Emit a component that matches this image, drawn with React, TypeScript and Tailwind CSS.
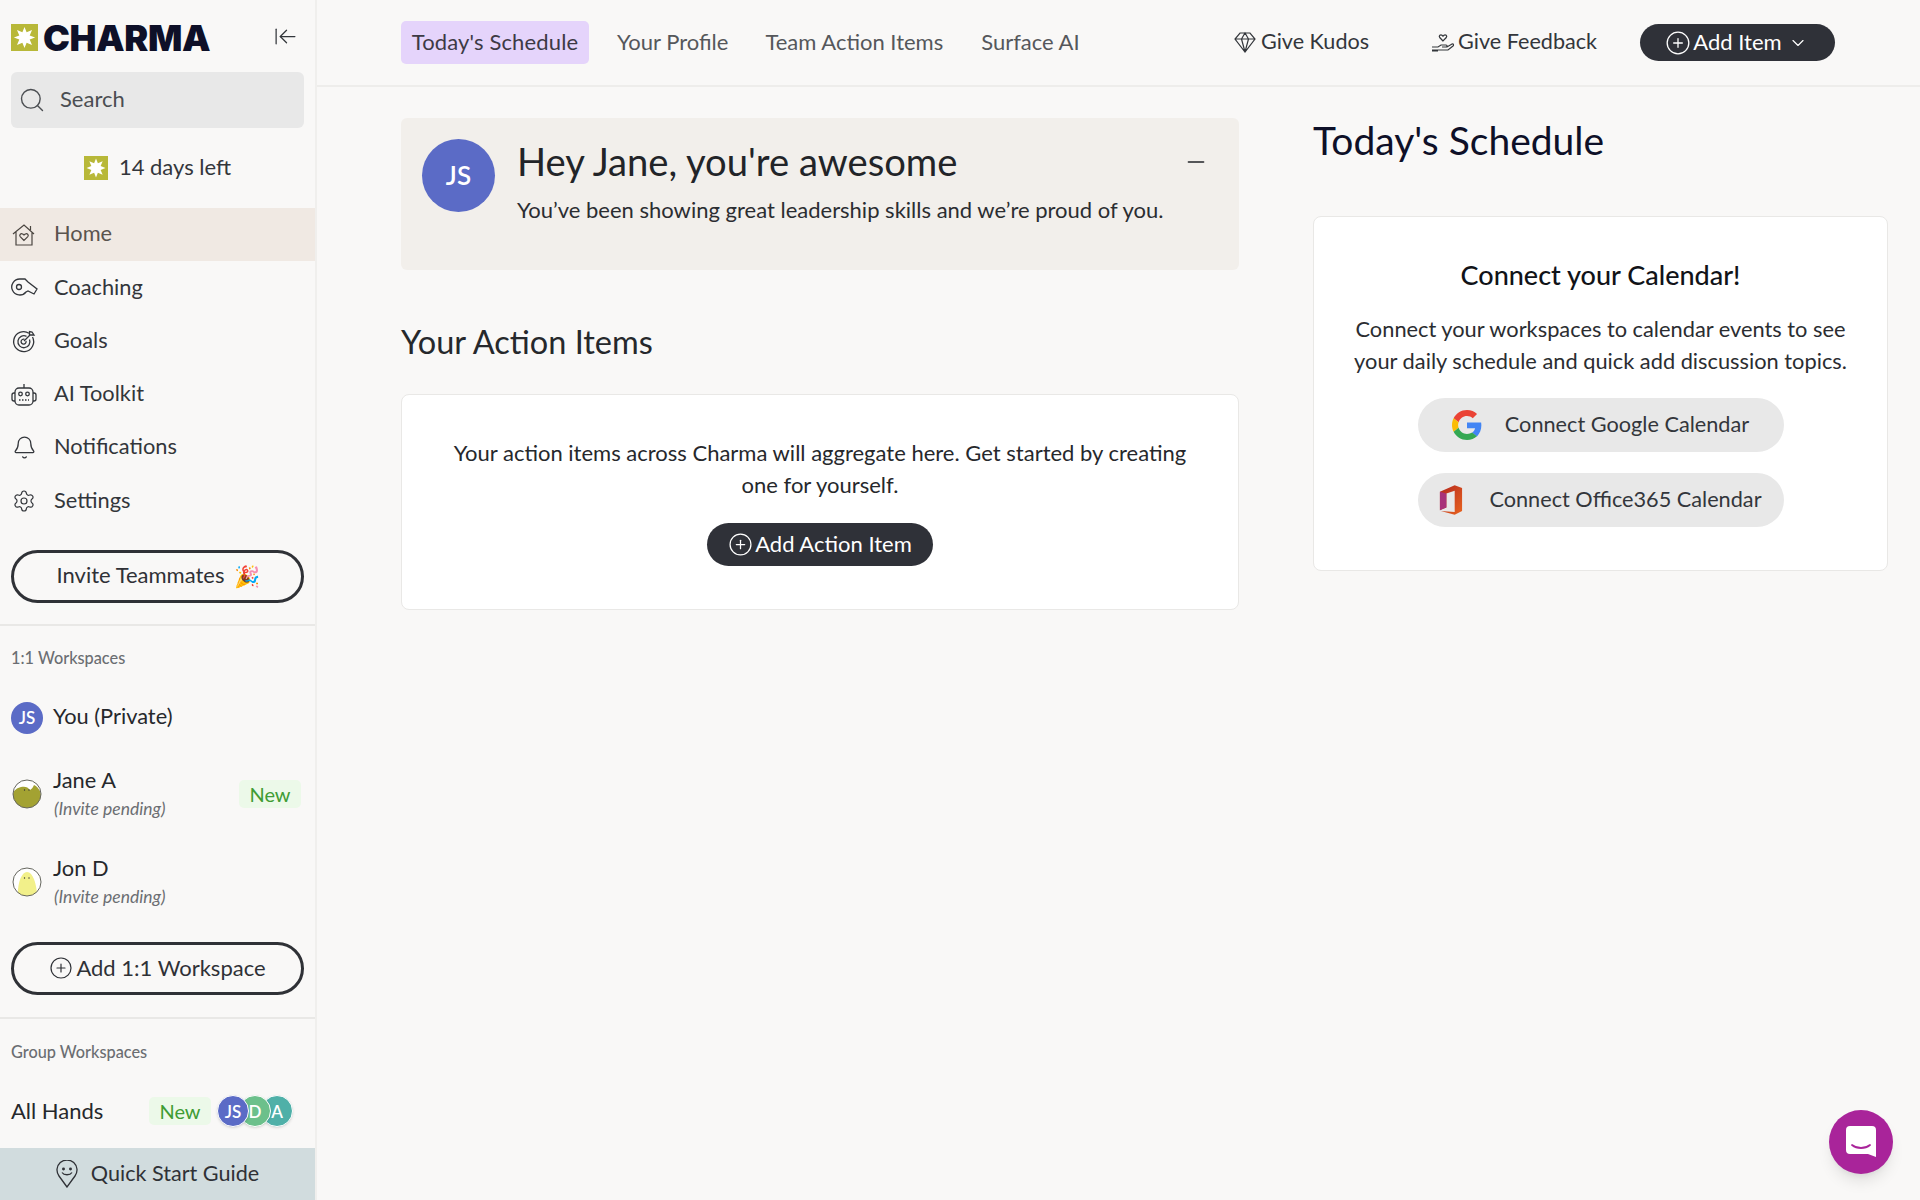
import React from "react";
import { Search, ChevronDown, CirclePlus, Bell, Settings, ArrowLeftToLine, Minus } from "lucide-react";

const font = { fontFamily: '"Lato", "Noto Sans", sans-serif' };

const Star = ({ size, className = "" }: { size: number; className?: string }) => (
  <svg width={size} height={size} viewBox="0 0 28 28" className={className}>
    <rect width="28" height="28" fill="#b8b838" />
    <polygon fill="#ffffff" points="14,3 16.2,8.6 21.8,6.2 19.4,11.8 25,14 19.4,16.2 21.8,21.8 16.2,19.4 14,25 11.8,19.4 6.2,21.8 8.6,16.2 3,14 8.6,11.8 6.2,6.2 11.8,8.6" />
  </svg>
);

const HomeIcon = () => (
  <svg width="24" height="24" viewBox="0 0 24 24" fill="none" stroke="#4a4540" strokeWidth="1.2">
    <path d="M1 11 12 2l10 9M4 9v13h16V9M18.500 7V3" />
    <path d="M12 17.500 8.200 13.600c-1.400-1.700.9-3.800 2.500-2.500l1.300 1 1.300-1c1.600-1.300 3.900.8 2.500 2.500z" />
  </svg>
);
const WhistleIcon = () => (
  <svg width="28" height="24" viewBox="0 0 28 24" fill="none" stroke="#33363b" strokeWidth="1.300">
    <path d="M10 3h5l3 3 9 7-3 5-6-3-2 1a8 8 0 1 1-6-13z" />
    <circle cx="9" cy="11" r="2.500" />
  </svg>
);
const GoalIcon = () => (
  <svg width="24" height="24" viewBox="0 0 24 24" fill="none" stroke="#33363b" strokeWidth="1.300">
    <path d="M17 4.200A10 10 0 1 0 20.500 8" />
    <path d="M14.500 7.300A6 6 0 1 0 17.500 10.500" />
    <path d="M12.500 10.300A2.500 2.500 0 1 0 14 12" />
    <path d="m12 12 6-6M17.500 2.500v3.500H22l-2-3z" />
  </svg>
);
const RobotIcon = () => (
  <svg width="26" height="24" viewBox="0 0 26 24" fill="none" stroke="#33363b" strokeWidth="1.300">
    <rect x="4" y="5" width="18" height="17" rx="4" />
    <path d="M13 5V1M4 10H3a2 2 0 0 0-2 2v4a2 2 0 0 0 2 2h1M22 10h1a2 2 0 0 1 2 2v4a2 2 0 0 1-2 2h-1" />
    <circle cx="9.500" cy="11" r="1.800" />
    <circle cx="16.500" cy="11" r="1.800" />
    <path d="M8 17h10" strokeDasharray="1.500 1.500" />
  </svg>
);

const NavRow = ({ icon, label, active = false }: { icon: React.ReactNode; label: string; active?: boolean }) => (
  <div className={`flex h-[53.3px] items-center ${active ? "bg-[#f0e9e3] text-[#5a544e]" : "text-[#33363b]"}`}>
    <div className="flex w-[54px] shrink-0 justify-center pr-[6px]">{icon}</div>
    <span className="pb-[2px] text-[21.800px]">{label}</span>
  </div>
);

const PillOutline = ({ children }: { children: React.ReactNode }) => (
  <div className="mx-[11px] flex h-[53px] items-center justify-center rounded-full border-[3px] border-[#2f3136] pb-[2px] text-[22px] text-[#2f3136]">
    {children}
  </div>
);

const NewBadge = () => (
  <span className="flex h-[28px] w-[62px] items-center justify-center rounded-[5px] bg-[#ecf9e9] text-[20px] text-[#3f9c35]">New</span>
);

const Blob = ({ fill }: { fill: string }) => (
  <svg width="30" height="30" viewBox="0 0 30 30" className="shrink-0">
    <defs>
      <clipPath id={`c${fill.slice(1)}`}><circle cx="15" cy="15" r="14" /></clipPath>
    </defs>
    <circle cx="15" cy="15" r="14" fill="#fff" />
    <g clipPath={`url(#c${fill.slice(1)})`}>
      {fill === "#a3a232" ? (
        <path d="M1 30V15c1-4 4-6 8-7 4-1 7 0 9 3 2-1 3-3 4-5 4 2 7 6 7 11v13z" fill={fill} />
      ) : (
        <path d="M6 30c-1-12 3-25 9-25s10 13 10 25z" fill={fill} />
      )}
    </g>
    <circle cx="15" cy="15" r="14" fill="none" stroke="#66665e" strokeWidth="1" />
    <circle cx="12.500" cy="11" r=".7" fill="#333" />
    <circle cx="17" cy="11" r=".7" fill="#333" />
  </svg>
);

const WorkspaceRow = ({ fill, name, badge = false }: { fill: string; name: string; badge?: boolean }) => (
  <div className="flex h-[88px] items-center pl-[12px] pr-[14px]">
    <Blob fill={fill} />
    <div className="ml-[11px] flex-1 leading-none">
      <div className="text-[21.800px] leading-[28px] text-[#26282c]">{name}</div>
      <div className="mt-[3px] pl-[1px] text-[17.5px] italic leading-[24px] text-[#6b6e72]">(Invite pending)</div>
    </div>
    {badge && <NewBadge />}
  </div>
);

const SmallAvatar = ({ bg, t, cls }: { bg: string; t: string; cls?: string }) => (
  <span className={`flex h-[32px] w-[32px] items-center justify-center rounded-full border border-white text-[17px] font-semibold text-white shadow-sm ${bg} ${cls ?? ""}`}>{t}</span>
);

const Sidebar = () => (
  <aside className="flex h-full w-[317px] shrink-0 flex-col border-r-2 border-[#f0efed]">
    <div className="flex h-[72px] items-center pl-[11px] pr-[17px] pt-[3px]">
      <Star size={27} />
      <span className="ml-[5px] flex-1 text-[36px] font-black leading-none tracking-[-0.4px] text-[#0e1028]" style={{ fontFamily: '"Inter", sans-serif' }}>CHARMA</span>
      <ArrowLeftToLine size={25} strokeWidth={1.200} color="#33363b" className="mb-[2px]" />
    </div>
    <div className="mx-[11px] flex h-[56px] items-center rounded-[6px] bg-[#e8e8e8] pl-[7px] text-[22px] text-[#4b4e52]">
      <Search size={28} strokeWidth={1.200} />
      <span className="ml-[14px] pb-[4px]">Search</span>
    </div>
    <div className="flex h-[80px] items-center justify-center pb-[3px] text-[22px] text-[#33363b]">
      <Star size={24} className="mr-[11px] mt-[3px]" />
      14 days left
    </div>
    <NavRow active icon={<HomeIcon />} label="Home" />
    <NavRow icon={<WhistleIcon />} label="Coaching" />
    <NavRow icon={<GoalIcon />} label="Goals" />
    <NavRow icon={<RobotIcon />} label="AI Toolkit" />
    <NavRow icon={<Bell size={25} strokeWidth={1.200} />} label="Notifications" />
    <NavRow icon={<Settings size={24} strokeWidth={1.200} />} label="Settings" />
    <div className="mt-[22px]">
      <PillOutline>
        <span className="ml-[2px] pb-[1px]">Invite Teammates</span>
        <span className="ml-[10px] text-[21px]">🎉</span>
      </PillOutline>
    </div>
    <div className="mt-[21px] h-[2px] bg-[#e9e8e6]" />
    <div className="mt-[21px] pl-[11px] text-[16.3px] font-medium leading-[22px] text-[#6b6e72]">1:1 Workspaces</div>
    <div className="mt-[33px] flex h-[32px] items-center pl-[11px]">
      <span className="flex h-[32px] w-[32px] items-center justify-center rounded-full bg-[#5b6bc6] text-[17px] font-semibold text-white">JS</span>
      <span className="ml-[10px] pb-[2px] text-[21.800px] text-[#26282c]">You (Private)</span>
    </div>
    <div className="mt-[16px]">
      <WorkspaceRow fill="#a3a232" name="Jane A" badge />
    </div>
    <WorkspaceRow fill="#f2f08a" name="Jon D" />
    <div className="mt-[16px]">
      <PillOutline>
        <CirclePlus size={24} strokeWidth={1.200} className="mt-[2px]" />
        <span className="ml-[3px]">Add 1:1 Workspace</span>
      </PillOutline>
    </div>
    <div className="mt-[22px] h-[2px] bg-[#e9e8e6]" />
    <div className="mt-[22px] pl-[11px] text-[16.3px] font-medium leading-[22px] text-[#6b6e72]">Group Workspaces</div>
    <div className="flex flex-1 items-center pl-[11px] pr-[22px] pt-[12px]">
      <span className="flex-1 pb-[2px] text-[22px] text-[#26282c]">All Hands</span>
      <NewBadge />
      <div className="ml-[6px] flex">
        <SmallAvatar bg="bg-[#5b6bc6]" t="JS" cls="relative z-20" />
        <SmallAvatar bg="bg-[#6cc08b]" t="D" cls="relative z-10 -ml-[10px]" />
        <SmallAvatar bg="bg-[#4fb0a8]" t="A" cls="-ml-[10px]" />
      </div>
    </div>
    <div className="flex h-[52px] shrink-0 items-center justify-center bg-[#d1dcde] text-[21.600px] text-[#2f3136]">
      <svg width="22" height="28" viewBox="0 0 22 28" fill="none" stroke="#2f3136" strokeWidth="1.300" className="mr-[13px]">
        <path d="M11 27 3 16a10 10 0 1 1 16 0z" />
        <circle cx="7.500" cy="9" r=".8" fill="#2f3136" />
        <circle cx="14.500" cy="9" r=".8" fill="#2f3136" />
        <path d="M6 12.500c2 3 8 3 10 0" />
      </svg>
      <span className="pb-[2px]">Quick Start Guide</span>
    </div>
  </aside>
);

const DiamondIcon = () => (
  <svg width="22" height="22" viewBox="0 0 22 22" fill="none" stroke="#33363b" strokeWidth="1.200" className="mr-[5px]">
    <path d="M6 2h10l5 6-10 13L1 8zM1 8h20M7.500 8 11 21l3.500-13L11 2z" />
  </svg>
);
const HandHeartIcon = () => (
  <svg width="24" height="24" viewBox="0 0 24 24" fill="none" stroke="#33363b" strokeWidth="1.200" className="mr-[3px]">
    <path d="M12 11 8.700 7.500c-1.300-1.700.9-3.500 2.300-2.300l1 .9 1-.9c1.400-1.200 3.600.6 2.300 2.300z" />
    <path d="M1 17h6l3-2h5c1.500 0 1.500 2 0 2h-4 5l5-3c1.500-.5 2 1 1 2l-5 4H7H1M1 21h6" />
  </svg>
);

const TopBar = () => (
  <header className="flex h-[87px] shrink-0 items-center border-b-2 border-[#eeedeb] pl-[84px] text-[22px]">
    <div className="flex h-[43px] w-[188px] items-center justify-center rounded-[5px] bg-[#e5d4fb] pb-[2px] tracking-[0.15px] text-[#3d3a45]">Today's Schedule</div>
    <span className="ml-[28px] pb-[2px] text-[#55575b]">Your Profile</span>
    <span className="ml-[37px] pb-[2px] text-[#55575b]">Team Action Items</span>
    <span className="ml-[38px] pb-[2px] text-[#55575b]">Surface AI</span>
    <div className="ml-auto flex items-center text-[21.600px] text-[#33363b]">
      <DiamondIcon /><span className="pb-[2px]">Give Kudos</span>
    </div>
    <div className="ml-[62px] flex items-center text-[21.600px] text-[#33363b]">
      <HandHeartIcon /><span className="pb-[2px]">Give Feedback</span>
    </div>
    <div className="ml-[43px] mr-[85px] flex h-[37px] w-[195px] items-center justify-center rounded-full bg-[#2f3138] text-white">
      <CirclePlus size={26} strokeWidth={1.200} className="mr-[2px] -ml-[2px]" />
      <span className="pb-[2px]">Add Item</span>
      <ChevronDown size={20} strokeWidth={1.400} className="ml-[6px]" />
    </div>
  </header>
);

const GoogleIcon = () => (
  <svg width="30" height="30" viewBox="0 0 48 48">
    <path fill="#EA4335" d="M24 9.500c3.540 0 6.710 1.220 9.210 3.600l6.850-6.850C35.900 2.380 30.470 0 24 0 14.620 0 6.510 5.380 2.560 13.220l7.980 6.190C12.430 13.720 17.740 9.500 24 9.500z" />
    <path fill="#4285F4" d="M46.980 24.550c0-1.570-.15-3.090-.38-4.550H24v9.020h12.940c-.58 2.960-2.260 5.480-4.780 7.180l7.730 6c4.510-4.180 7.090-10.360 7.090-17.650z" />
    <path fill="#FBBC05" d="M10.530 28.590c-.48-1.450-.76-2.990-.76-4.590s.27-3.140.76-4.590l-7.980-6.190C.92 16.460 0 20.120 0 24c0 3.880.92 7.540 2.560 10.780l7.970-6.190z" />
    <path fill="#34A853" d="M24 48c6.480 0 11.930-2.130 15.890-5.810l-7.730-6c-2.150 1.450-4.920 2.300-8.160 2.300-6.260 0-11.570-4.220-13.470-9.910l-7.980 6.190C6.510 42.620 14.620 48 24 48z" />
  </svg>
);
const OfficeIcon = () => (
  <svg width="24" height="30" viewBox="0 0 26 32">
    <defs>
      <linearGradient id="off" x1="0" y1="0" x2="1" y2="1">
        <stop offset="0" stopColor="#b3261e" />
        <stop offset="1" stopColor="#e8641f" />
      </linearGradient>
    </defs>
    <path fill="url(#off)" d="M17 0 25 3v25l-8 4-15-4 15 1V6L8 9v15l-7 3V7z" />
    <path fill="#a83279" d="M1 7l7 2v15l-7 3z" />
  </svg>
);

const CalButton = ({ icon, label, iconGap }: { icon: React.ReactNode; label: string; iconGap: string }) => (
  <div className="flex h-[54px] w-[366px] items-center justify-center rounded-full bg-[#e8e8e8] text-[21.700px] text-[#33363b]">
    <span className={iconGap}>{icon}</span>
    <span className="pb-[1px]">{label}</span>
  </div>
);

const Card = ({ className = "", children }: { className?: string; children: React.ReactNode }) => (
  <div className={`rounded-[8px] border border-[#e9e8e6] bg-white ${className}`}>{children}</div>
);

export default function App() {
  return (
    <div className="relative flex h-[1200px] w-[1920px] overflow-hidden bg-[#f9f8f7]" style={font}>
      <Sidebar />
      <main className="flex min-w-0 flex-1 flex-col">
        <TopBar />
        <div className="flex gap-[74px] pl-[84px] pt-[31px]">
          <section className="w-[838px]">
            <div className="flex h-[152px] rounded-[6px] bg-[#f2efeb] pl-[21px] pr-[33px] pt-[21px]">
              <span className="flex h-[73px] w-[73px] shrink-0 items-center justify-center rounded-full bg-[#5b6bc6] text-[26px] font-semibold text-white">JS</span>
              <div className="ml-[22px] flex-1">
                <h1 className="text-[38.200px] leading-[44px] text-[#222428]">Hey Jane, you're awesome</h1>
                <p className="mt-[12px] text-[22px] leading-[30px] text-[#2b2d31]">You’ve been showing great leadership skills and we’re proud of you.</p>
              </div>
              <Minus size={26} strokeWidth={1.500} color="#222428" className="mt-[10px] -mr-[3px]" />
            </div>
            <h2 className="mt-[52px] text-[32.500px] leading-[40px] text-[#26282c]">Your Action Items</h2>
            <Card className="mt-[32px] flex h-[216px] flex-col items-center pt-[42px]">
              <p className="w-[760px] text-center text-[22px] leading-[32px] text-[#26282c]">Your action items across Charma will aggregate here. Get started by creating one for yourself.</p>
              <div className="mt-[22px] flex h-[43px] w-[226px] items-center justify-center rounded-full bg-[#2f3138] text-[22px] text-white">
                <CirclePlus size={25} strokeWidth={1.200} className="mr-[2px]" />
                <span className="pb-[2px]">Add Action Item</span>
              </div>
            </Card>
          </section>
          <section className="w-[575px]">
            <h2 className="text-[39px] leading-[44px] text-[#0e1028]">Today's Schedule</h2>
            <Card className="mt-[54px] flex h-[355px] flex-col items-center pt-[40px]">
              <h3 className="text-[27px] font-medium leading-[36px] text-[#111318]">Connect your Calendar!</h3>
              <p className="mt-[20px] w-[510px] text-center text-[21.800px] leading-[32px] text-[#2b2d31]">Connect your workspaces to calendar events to see your daily schedule and quick add discussion topics.</p>
              <div className="mt-[21px] flex flex-col gap-[21px]">
                <CalButton icon={<GoogleIcon />} label="Connect Google Calendar" iconGap="mr-[23px] flex" />
                <CalButton icon={<OfficeIcon />} label="Connect Office365 Calendar" iconGap="mr-[26px] flex" />
              </div>
            </Card>
          </section>
        </div>
      </main>
      <div className="absolute bottom-[26px] right-[27px] flex h-[64px] w-[64px] items-center justify-center rounded-full bg-[#a9249a] shadow-lg">
        <svg width="30" height="32" viewBox="0 0 30 32">
          <path fill="#fff" d="M4 0h22a4 4 0 0 1 4 4v27l-8-3H4a4 4 0 0 1-4-4V4a4 4 0 0 1 4-4z" />
          <path d="M6 19c5 4 13 4 18 0" fill="none" stroke="#a9249a" strokeWidth="1.800" strokeLinecap="round" />
        </svg>
      </div>
    </div>
  );
}
